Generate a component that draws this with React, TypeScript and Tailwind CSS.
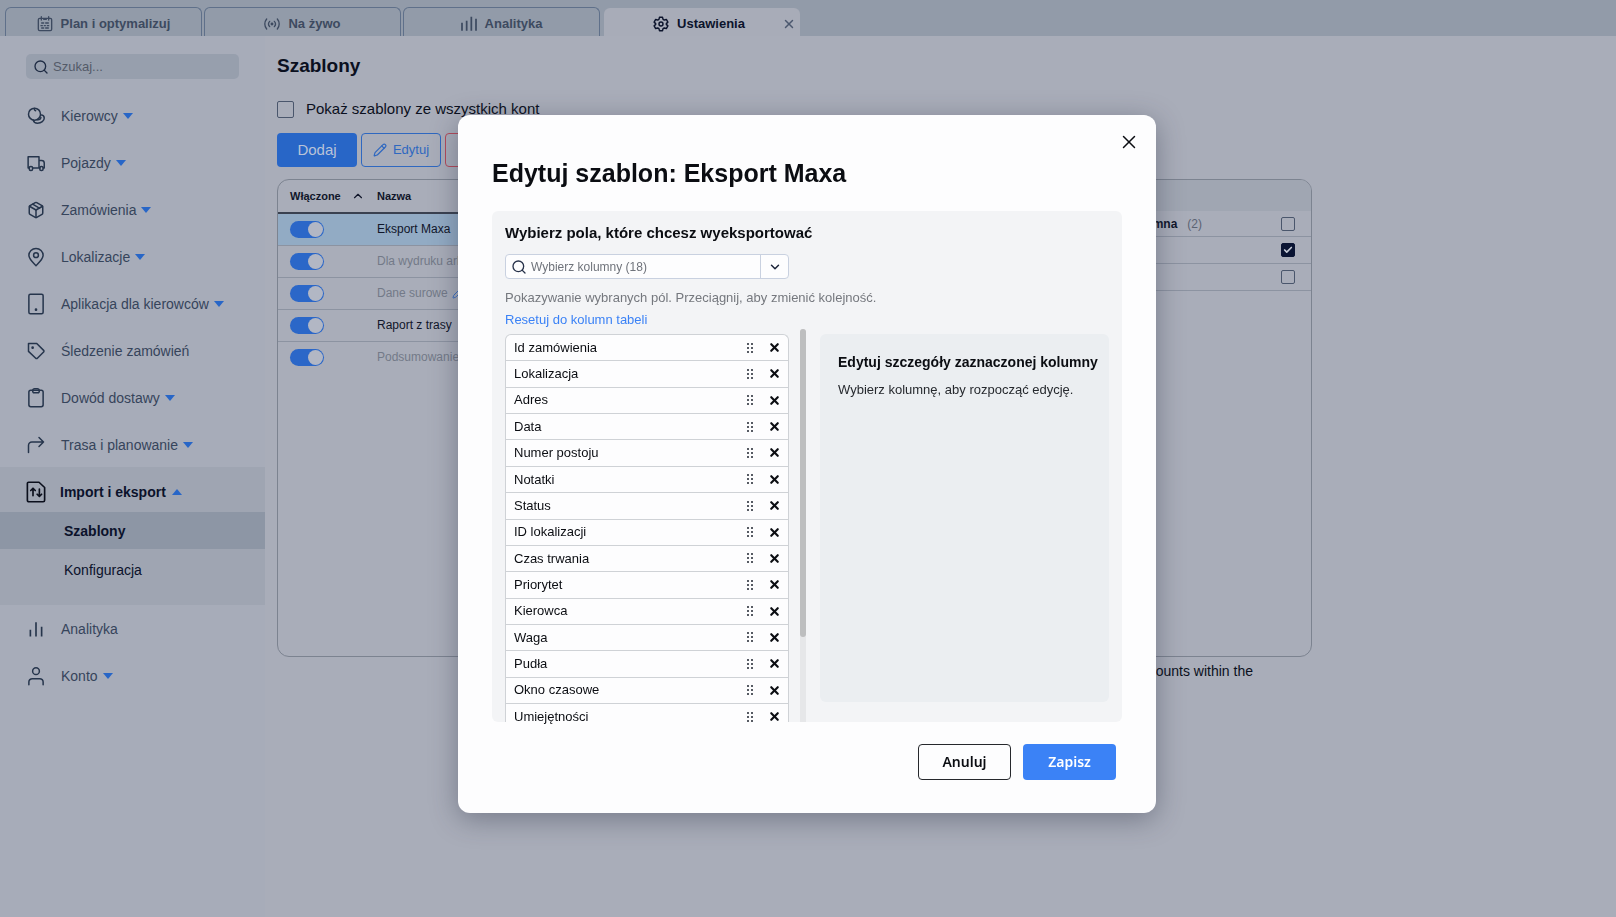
import React, { useState } from 'react';
import { Check, ChevronDown, ChevronUp, Package, Pencil, Search, X } from 'lucide-react';

interface IconProps {
    className?: string;
}

const stroke = {
    viewBox: '0 0 24 24',
    fill: 'none',
    stroke: 'currentColor',
    strokeWidth: 2,
    strokeLinecap: 'round' as const,
    strokeLinejoin: 'round' as const,
    'aria-hidden': true,
};

const PlanIcon: React.FC<IconProps> = ({ className }) => (
    <svg {...stroke} className={className}>
        <rect x="2" y="3.5" width="20" height="18.5" rx="2" />
        <path d="M6.5 1v5M17.5 1v5M10 5h4M7 10.500h3M13 10.500h4M6 14.500h2M11 14.500h1.500M15.500 14.500h2M7 18h3M13 18h4" />
    </svg>
);

const LiveIcon: React.FC<IconProps> = ({ className }) => (
    <svg {...stroke} className={className}>
        <circle cx="12" cy="12" r="1.2" fill="currentColor" />
        <path d="M8.500 8a6 6 0 0 0 0 8M15.500 8a6 6 0 0 1 0 8M4 4.500a11.500 11.500 0 0 0 0 15M20 4.500a11.500 11.500 0 0 1 0 15" />
    </svg>
);

const BarsIcon: React.FC<IconProps> = ({ className }) => (
    <svg {...stroke} strokeWidth={2.6} strokeLinecap="butt" className={className}>
        <path d="M1.500 10v12M8.500 7v15M15.500 1v21M22.500 4v18" />
    </svg>
);

const GearIcon: React.FC<IconProps> = ({ className }) => (
    <svg {...stroke} strokeWidth={2.2} className={className}>
        <path d="M9.700 2h4.600l.8 3.100 1.800 1 3.100-.9 2.300 4-2.300 2.200v1.200l2.300 2.200-2.300 4-3.100-.9-1.800 1-.8 3.100H9.700l-.8-3.100-1.800-1-3.100.9-2.300-4L4 12.600v-1.200L1.700 9.200l2.300-4 3.100.9 1.800-1z" />
        <circle cx="12" cy="12" r="3" />
    </svg>
);

const DriversIcon: React.FC<IconProps> = ({ className }) => (
    <svg {...stroke} className={className}>
        <circle cx="10" cy="9.500" r="8" />
        <path d="M10 2c-.5 1.500.3 2.800 1.500 3M18.500 10.500c2.600.2 4.500 1.700 4.500 4 0 4-4 7-9 7-2.800 0-5-1.200-5.500-3.800M14 17c2.500.2 4.200-1 4.500-3" />
    </svg>
);

const TruckIcon: React.FC<IconProps> = ({ className }) => (
    <svg {...stroke} className={className}>
        <path d="M3 18.500H1.500V3.500H16v15H7.500M16 8.500h3.500c1.800 0 3.500 1.500 3.500 3.500v6.500h-1.500M17.500 18.500H16" />
        <rect x="3" y="16.500" width="4.500" height="5.500" rx="2" />
        <rect x="17" y="16.500" width="4.500" height="5.500" rx="2" />
    </svg>
);

const PinIcon: React.FC<IconProps> = ({ className }) => (
    <svg {...stroke} className={className}>
        <path d="M21.500 9.800C21.500 15 15 20.500 12 23.500 9 20.500 2.500 15 2.500 9.800a9.500 9.300 0 0 1 19 0z" />
        <circle cx="12" cy="9.500" r="3.200" />
    </svg>
);

const DeviceIcon: React.FC<IconProps> = ({ className }) => (
    <svg {...stroke} className={className}>
        <rect x="2.500" y="-1" width="19" height="26" rx="2" />
        <circle cx="12" cy="19.500" r="0.800" fill="currentColor" />
    </svg>
);

const TagIcon: React.FC<IconProps> = ({ className }) => (
    <svg {...stroke} className={className}>
        <path d="M2 2h11l9.500 9.500v1.500L13.500 22h-1.500L2 12.500z" />
        <circle cx="7.500" cy="7.500" r="0.800" fill="currentColor" />
    </svg>
);

const ClipboardIcon: React.FC<IconProps> = ({ className }) => (
    <svg {...stroke} className={className}>
        <rect x="2.500" y="1.500" width="19" height="22" rx="2.500" />
        <path d="M7.500 1.500C8 0 9-.5 10-.5h4c1 0 2 .5 2.500 2 0 2.500-.5 3.500-2 3.500h-5c-1.500 0-2-1-2-3.500z" />
    </svg>
);

const RouteIcon: React.FC<IconProps> = ({ className }) => (
    <svg {...stroke} className={className}>
        <path d="M2 22v-9.500A4.500 4.500 0 0 1 6.500 8H22M16 2l6 6-6 6" />
    </svg>
);

const ExchangeIcon: React.FC<IconProps> = ({ className }) => (
    <svg {...stroke} strokeWidth={2.2} className={className}>
        <path d="M2-1h14L23.500 6v17a2 2 0 0 1-2 2H2.500a2 2 0 0 1-2-2V.5A1.500 1.500 0 0 1 2-1z" />
        <path d="M8 17V7M5 10l3-3 3 3M16.500 8v10M13.500 15l3 3 3-3" />
    </svg>
);

const StatsIcon: React.FC<IconProps> = ({ className }) => (
    <svg {...stroke} strokeLinecap="butt" strokeWidth={2.2} className={className}>
        <path d="M4.500 13v9M12 3v19M19.500 9v13" />
    </svg>
);

const UserIcon: React.FC<IconProps> = ({ className }) => (
    <svg {...stroke} className={className}>
        <circle cx="12" cy="5.500" r="4.500" />
        <path d="M2.500 23.500V20a4.500 4.500 0 0 1 4.500-4.500h10a4.500 4.500 0 0 1 4.500 4.500v3.500" />
    </svg>
);

const GripIcon: React.FC = () => (
    <svg viewBox="0 0 8 12" className="h-3 w-2" fill="#565b63" aria-hidden="true">
        {[1, 5, 9].map(y => (
            <React.Fragment key={y}>
                <rect x="1" y={y} width="2" height="2" />
                <rect x="5" y={y} width="2" height="2" />
            </React.Fragment>
        ))}
    </svg>
);

const Caret: React.FC<{ up?: boolean }> = ({ up }) => (
    <svg viewBox="0 0 10 6" className="h-1.5 w-2.5" fill="#2866c7" aria-hidden="true">
        <path d={up ? 'M0 6L5 0l5 6z' : 'M0 0h10L5 6z'} />
    </svg>
);

const TABS = [
    { label: 'Plan i optymalizuj', icon: PlanIcon },
    { label: 'Na żywo', icon: LiveIcon },
    { label: 'Analityka', icon: BarsIcon },
];

const NAV = [
    { label: 'Kierowcy', icon: DriversIcon, caret: true },
    { label: 'Pojazdy', icon: TruckIcon, caret: true },
    { label: 'Zamówienia', icon: Package, caret: true },
    { label: 'Lokalizacje', icon: PinIcon, caret: true },
    { label: 'Aplikacja dla kierowców', icon: DeviceIcon, caret: true },
    { label: 'Śledzenie zamówień', icon: TagIcon, caret: false },
    { label: 'Dowód dostawy', icon: ClipboardIcon, caret: true },
    { label: 'Trasa i planowanie', icon: RouteIcon, caret: true },
];

const NAV_BOTTOM = [
    { label: 'Analityka', icon: StatsIcon, caret: false },
    { label: 'Konto', icon: UserIcon, caret: true },
];

const TEMPLATES = [
    { name: 'Eksport Maxa', muted: false, editable: false },
    { name: 'Dla wydruku arkusza', muted: true, editable: false },
    { name: 'Dane surowe', muted: true, editable: true },
    { name: 'Raport z trasy', muted: false, editable: false },
    { name: 'Podsumowanie', muted: true, editable: false },
];

const FIELDS = [
    'Id zamówienia',
    'Lokalizacja',
    'Adres',
    'Data',
    'Numer postoju',
    'Notatki',
    'Status',
    'ID lokalizacji',
    'Czas trwania',
    'Priorytet',
    'Kierowca',
    'Waga',
    'Pudła',
    'Okno czasowe',
    'Umiejętności',
];

interface NavItemProps {
    label: string;
    icon: React.ElementType;
    caret: boolean;
}

const NavItem: React.FC<NavItemProps> = ({ label, icon: Icon, caret }) => (
    <a href="#" className="flex h-[47px] items-center pl-[27px] text-sm text-[#36445b]">
        <Icon className="h-[18px] w-[18px] overflow-visible text-[#26354c]" />
        <span className="ml-4">{label}</span>
        {caret && <span className="ml-[5px]"><Caret /></span>}
    </a>
);

const TabBar: React.FC = () => (
    <nav className="flex h-9 items-end gap-0.5 bg-[#929ba9] pl-[5px]">
        {TABS.map(({ label, icon: Icon }) => (
            <button
                key={label}
                type="button"
                className="flex h-[29px] w-[197px] items-center justify-center gap-2 rounded-t-md border border-b-0 border-[#5f708a] pt-1 text-[13px] font-bold text-[#3d4a60]"
            >
                <Icon className="h-4 w-4 overflow-visible" />
                {label}
            </button>
        ))}
        <div className="ml-0.5 flex h-7 w-[196px] items-center rounded-t-md bg-[#a8acb8] pt-1 pr-1 text-[#0c142c]">
            <button type="button" className="flex flex-1 items-center justify-center gap-2 pl-3 text-[13px] font-bold">
                <GearIcon className="h-4 w-4 overflow-visible" />
                Ustawienia
            </button>
            <button type="button" aria-label="Zamknij kartę" className="text-[#4c586e]">
                <X className="h-3.5 w-3.5" strokeWidth={2.5} />
            </button>
        </div>
    </nav>
);

const Sidebar: React.FC = () => (
    <aside className="w-[265px] shrink-0 bg-[#a7acb9]">
        <div className="px-[26px] pt-[18px] pb-[13px]">
            <label className="flex h-[25px] items-center gap-1 rounded-[5px] bg-[#979fad] pl-[7px]">
                <Search className="h-4 w-4 text-[#1f2c44]" />
                <input
                    type="text"
                    aria-label="Szukaj"
                    placeholder="Szukaj..."
                    className="min-w-0 flex-1 bg-transparent text-[13px] outline-none placeholder:text-[#545b69]"
                />
            </label>
        </div>
        {NAV.map(item => <NavItem key={item.label} {...item} />)}
        <div className="-mt-px bg-[#9fa5b2] pb-[15px] text-[#0b122b]">
            <a href="#" className="flex h-[45px] items-center pt-1 pl-[27px] text-sm font-bold">
                <ExchangeIcon className="h-[18px] w-[18px] overflow-visible text-[#0b0f1c]" />
                <span className="ml-[15px]">Import i eksport</span>
                <span className="ml-1.5"><Caret up /></span>
            </a>
            <a href="#" className="flex h-[37px] items-center bg-[#8d96a5] pl-16 text-sm font-bold">Szablony</a>
            <a href="#" className="flex h-[41px] items-center pl-16 text-sm">Konfiguracja</a>
        </div>
        {NAV_BOTTOM.map(item => <NavItem key={item.label} {...item} />)}
    </aside>
);

const Toggle: React.FC<{ label: string }> = ({ label }) => (
    <label className="flex h-[17px] w-[34px] items-center justify-end rounded-full bg-[#2b67c8] p-px">
        <input type="checkbox" role="switch" defaultChecked aria-label={label} className="sr-only" />
        <span className="h-[15px] w-[15px] rounded-full bg-[#b2b7c4]" />
    </label>
);

const TemplatesTable: React.FC = () => (
    <div className="h-[478px] flex-1 overflow-hidden rounded-xl border border-[#7c8390]">
        <table className="w-full table-fixed text-left text-xs text-[#10162a]">
            <thead>
                <tr className="h-[33px] border-b-2 border-[#3a4150]">
                    <th className="w-[99px] pl-3 text-[11px]">
                        <span className="flex items-center gap-2.5">
                            Włączone
                            <ChevronUp className="h-3.5 w-3.5" />
                        </span>
                    </th>
                    <th className="text-[11px]">Nazwa</th>
                </tr>
            </thead>
            <tbody>
                {TEMPLATES.map((row, i) => (
                    <tr
                        key={row.name}
                        className={`h-8 border-b border-[#8c93a1] last:border-b-0 ${i === 0 ? 'bg-[#92abc4]' : ''} ${row.muted ? 'text-[#737a88]' : ''}`}
                    >
                        <td className="pl-3"><Toggle label={row.name} /></td>
                        <td>
                            <span className="flex items-center gap-1">
                                {row.name}
                                {row.editable && <Pencil className="h-3 w-3 text-[#3a6fc4]" />}
                            </span>
                        </td>
                    </tr>
                ))}
            </tbody>
        </table>
    </div>
);

const ColumnBox: React.FC<{ label: string; checked?: boolean }> = ({ label, checked }) => (
    <label
        className={`flex h-3.5 w-3.5 items-center justify-center rounded-xs border ${checked ? 'border-[#0a1433] bg-[#0a1433]' : 'border-[#4a566c]'}`}
    >
        <input type="checkbox" defaultChecked={checked} aria-label={label} className="sr-only" />
        {checked && <Check className="h-2.5 w-2.5 text-[#c5cad6]" strokeWidth={4} />}
    </label>
);

const ColumnsPanel: React.FC = () => (
    <div className="h-[478px] flex-1 overflow-hidden rounded-xl border border-[#7c8390] text-xs text-[#10162a]">
        <div className="h-[31px] bg-[#a0a6b2]" />
        <div className="flex h-[26px] items-center justify-end border-b border-[#8c93a1] pr-4">
            <span className="font-bold">Kolumna</span>
            <span className="mr-[79px] ml-2.5 text-[#5b6373]">(2)</span>
            <ColumnBox label="Wszystkie kolumny" />
        </div>
        <div className="flex h-[27px] items-center justify-end border-b border-[#8c93a1] pr-4">
            <ColumnBox label="Kolumna 1" checked />
        </div>
        <div className="flex h-[27px] items-center justify-end border-b border-[#8c93a1] pr-4">
            <ColumnBox label="Kolumna 2" />
        </div>
    </div>
);

const EditTemplateDialog: React.FC<{ onClose: () => void }> = ({ onClose }) => {
    const [fields, setFields] = useState(FIELDS);

    return (
        <div className="fixed inset-0 z-50 flex items-start justify-center overflow-auto pt-[115px] pr-0.5">
            <div
                role="dialog"
                aria-modal="true"
                aria-labelledby="dialog-title"
                className="w-[698px] rounded-xl bg-[#fdfdfe] px-[34px] pb-[33px] text-[#0b0d12] shadow-[0_6px_28px_rgba(40,46,66,0.4)]"
            >
                <div className="-mr-[18px] flex h-[42px] items-end justify-end">
                    <button type="button" aria-label="Zamknij" onClick={onClose} className="mb-1">
                        <X className="h-[22px] w-[22px]" strokeWidth={1.6} />
                    </button>
                </div>
                <h2 id="dialog-title" className="text-[25px] leading-8 font-bold">Edytuj szablon: Eksport Maxa</h2>

                <section className="mt-[22px] h-[511px] rounded-md bg-[#f3f4f6] px-[13px] pt-3">
                    <h3 className="text-[15px] leading-5 font-bold">Wybierz pola, które chcesz wyeksportować</h3>
                    <div className="mt-[11px] flex h-[25px] w-[284px] rounded-sm border border-[#c9d1e0] bg-[#fdfdfe]">
                        <label className="flex flex-1 items-center gap-1 border-r border-[#c9d1e0] pl-[5px]">
                            <Search className="h-4 w-4 text-[#27324a]" />
                            <input
                                type="text"
                                aria-label="Wybierz kolumny"
                                placeholder="Wybierz kolumny (18)"
                                className="min-w-0 flex-1 bg-transparent text-xs outline-none placeholder:text-[#6f737b]"
                            />
                        </label>
                        <button type="button" aria-label="Rozwiń listę" className="flex w-[27px] items-center justify-center">
                            <ChevronDown className="h-3.5 w-3.5 text-[#1a2338]" strokeWidth={2.5} />
                        </button>
                    </div>
                    <p className="mt-[11px] text-[13px] leading-4 text-[#75787e]">
                        Pokazywanie wybranych pól. Przeciągnij, aby zmienić kolejność.
                    </p>
                    <a href="#" className="mt-1.5 block w-fit text-[13px] leading-4 text-[#3b82f6]">Resetuj do kolumn tabeli</a>

                    <div className="mt-px flex">
                        {/* the last row is shorter, its content runs over the panel edge */}
                        <ul className="mt-[5px] grid h-[388px] w-[284px] shrink-0 grid-rows-[repeat(14,minmax(0,1fr))_18px] rounded-t-md border border-b-0 border-[#cfd2d6] bg-[#fdfdfe]">
                            {fields.map(field => (
                                <li key={field} className="min-h-0 border-b border-[#cfd2d6] text-[13px] last:border-b-0">
                                    <div className="flex h-[25px] items-center pr-[7px] pl-2">
                                        <span className="flex-1">{field}</span>
                                        <GripIcon />
                                        <button
                                            type="button"
                                            aria-label={`Usuń ${field}`}
                                            className="ml-3.5"
                                            onClick={() => setFields(prev => prev.filter(f => f !== field))}
                                        >
                                            <X className="h-[13px] w-[13px]" strokeWidth={4} />
                                        </button>
                                    </div>
                                </li>
                            ))}
                        </ul>
                        <div className="ml-[11px] h-[393px] w-1.5 shrink-0 rounded-t-full bg-[#e6e7e9]">
                            <div className="h-[308px] rounded-full bg-[#bdbebf]" />
                        </div>
                        <div className="mt-[5px] ml-3.5 h-[368px] flex-1 rounded-md bg-[#ebeef1] pt-[18px] pl-[18px]">
                            <h4 className="text-sm leading-5 font-bold whitespace-nowrap">Edytuj szczegóły zaznaczonej kolumny</h4>
                            <p className="mt-2.5 text-[13px] leading-4 text-[#26292e]">Wybierz kolumnę, aby rozpocząć edycję.</p>
                        </div>
                    </div>
                </section>

                <div className="mt-[22px] flex justify-end gap-3 pr-1.5 font-['Noto_Sans',sans-serif] text-sm font-semibold">
                    <button type="button" onClick={onClose} className="h-9 w-[93px] rounded-sm border border-[#26282c]">Anuluj</button>
                    <button type="button" onClick={onClose} className="h-9 w-[93px] rounded-sm bg-[#3b82f6] text-white">Zapisz</button>
                </div>
            </div>
        </div>
    );
};

export default function App() {
    const [open, setOpen] = useState(true);

    return (
        <div className="flex min-h-screen flex-col bg-[#a9adb9] font-['Liberation_Sans',Arial,sans-serif] text-[#0b1020]">
            <TabBar />
            <div className="flex flex-1">
                <Sidebar />
                <main className="max-w-[1047px] flex-1 pt-4 pl-3">
                    <h1 className="text-[19px] leading-7 font-bold">Szablony</h1>
                    <label className="mt-5 flex h-[18px] items-center gap-3 text-[15px]">
                        <input type="checkbox" className="h-[17px] w-[17px] appearance-none rounded-xs border border-[#4a566c]" />
                        Pokaż szablony ze wszystkich kont
                    </label>
                    <div className="mt-[15px] flex h-[34px] gap-1 text-[13px]">
                        <button type="button" className="w-20 rounded-sm bg-[#2866c7] text-[15px] text-[#b9c3d8]">Dodaj</button>
                        <button
                            type="button"
                            onClick={() => setOpen(true)}
                            className="flex w-20 items-center justify-center gap-1.5 rounded-sm border border-[#2f68c0] text-[#2f68c0]"
                        >
                            <Pencil className="h-3.5 w-3.5" />
                            Edytuj
                        </button>
                        <button type="button" className="w-20 rounded-sm border border-[#b34a5a] text-[#b34a5a]">Usuń</button>
                    </div>
                    <div className="mt-3 flex gap-5">
                        <TemplatesTable />
                        <ColumnsPanel />
                    </div>
                    <p className="mt-1 pr-[59px] text-right text-sm leading-5">accounts within the</p>
                </main>
            </div>
            {open && <EditTemplateDialog onClose={() => setOpen(false)} />}
        </div>
    );
}
